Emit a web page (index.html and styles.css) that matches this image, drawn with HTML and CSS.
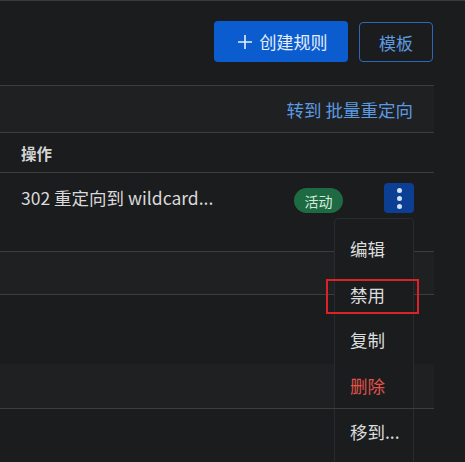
FILE: index.html
```html
<!DOCTYPE html>
<html lang="zh">
<head>
<meta charset="utf-8">
<link rel="stylesheet" href="styles.css">
</head>
<body>
<div class="page">
  <div class="toolbar">
    <button class="btn btn-primary">
      <svg class="plus" width="16" height="16" viewBox="0 0 16 16"><path d="M8 1v14M1 8h14" stroke="#e6eefc" stroke-width="1.6" fill="none"/></svg>
      <span>创建规则</span>
    </button>
    <button class="btn btn-outline">模板</button>
  </div>
  <div class="table">
    <div class="bulk"><a class="link">转到 批量重定向</a></div>
    <div class="head">操作</div>
    <div class="row">
      <span class="desc">302 重定向到 wildcard...</span>
      <span class="badge">活动</span>
      <span class="kebab-wrap">
        <button class="kebab"><i></i><i></i><i></i></button>
        <div class="menu">
          <div class="item">编辑</div>
          <div class="item">禁用</div>
          <div class="item">复制</div>
          <div class="item danger">删除</div>
          <div class="sep"></div>
          <div class="item">移到...</div>
        </div>
        <div class="highlight"></div>
      </span>
    </div>
    <div class="band light h42"></div>
    <div class="band dark h69"></div>
    <div class="band light h44 nob"></div>
    <div class="band dark h60"></div>
  </div>
</div>
</body>
</html>
```

FILE: styles.css
```css
* { box-sizing: border-box; }
html, body {
  margin: 0;
  height: 100%;
  background: #1b1c1e;
  overflow: hidden;
}
body {
  font-family: "Noto Sans CJK SC", "Noto Sans", sans-serif;
  color: #d9d9d9;
}
.page {
  border-top: 1px solid #3a3b3d;
}
.toolbar {
  height: 84px;
  display: flex;
  justify-content: flex-end;
  align-items: flex-start;
  gap: 11px;
  padding: 20px 32px 0 0;
}
.btn {
  font-family: inherit;
  font-size: 17px;
  border-radius: 4px;
  display: flex;
  align-items: center;
  justify-content: center;
  cursor: pointer;
  padding: 0;
}
.btn-primary {
  width: 134px;
  height: 41px;
  background: #0b5dcf;
  border: none;
  color: #e6eefc;
  gap: 7px;
  padding-left: 2px;
}
.btn-outline {
  width: 74px;
  height: 40px;
  margin-top: 1px;
  background: transparent;
  border: 1px solid #2d67b8;
  color: #5b9ae0;
}
.table {
  width: 434px;
}
.bulk {
  border-top: 1px solid #3c3d3f;
  height: 47px;
  background: #1f2022;
  display: flex;
  justify-content: flex-end;
  align-items: center;
  padding-right: 21px;
  font-size: 17.5px;
}
.link {
  color: #5b9ae0;
}
.head {
  border-top: 1px solid #3c3d3f;
  height: 40px;
  display: flex;
  align-items: center;
  padding-left: 21px;
  font-size: 15.5px;
  font-weight: 700;
  color: #d4d4d4;
}
.row {
  border-top: 1px solid #3c3d3f;
  height: 79px;
  display: flex;
  align-items: flex-start;
  padding: 10px 20px 0 21px;
}
.desc {
  flex: 1;
  font-size: 17.5px;
  line-height: 30px;
  color: #d9d9d9;
  white-space: nowrap;
}
.badge {
  margin-top: 5px;
  width: 49px;
  height: 25px;
  border-radius: 13px;
  background: #1d6a43;
  color: #d3eadb;
  font-size: 14px;
  display: flex;
  align-items: center;
  justify-content: center;
  margin-right: 41px;
}
.kebab-wrap {
  position: relative;
}
.kebab {
  width: 30px;
  height: 30px;
  border: none;
  border-radius: 4px;
  background: #0c3f94;
  display: flex;
  flex-direction: column;
  align-items: center;
  justify-content: center;
  gap: 3px;
  padding: 0;
}
.kebab i {
  width: 5px;
  height: 5px;
  border-radius: 50%;
  background: #d2e2fb;
}
.menu {
  position: absolute;
  top: 35px;
  right: 0;
  width: 80px;
  height: 260px;
  background: #1b1c1e;
  border: 1px solid #2a2b2e;
  border-radius: 4px 4px 0 0;
  padding-top: 7px;
  z-index: 2;
}
.item {
  height: 45.5px;
  display: flex;
  align-items: center;
  padding-left: 15px;
  font-size: 17.5px;
  color: #dcdcdc;
}
.item.danger {
  color: #e0524a;
}
.sep {
  height: 1px;
  background: #3c3d3f;
  margin: 0 -1px;
}
.highlight {
  position: absolute;
  top: 96px;
  left: -58px;
  width: 93px;
  height: 35px;
  border: 2px solid #dc2228;
  z-index: 3;
}
.band {
  border-top: 1px solid #3c3d3f;
}
.band.nob {
  border-top: none;
}
.light { background: #1f2022; }
.dark { background: #1b1c1e; }
.h42 { height: 43px; }
.h69 { height: 70px; }
.h44 { height: 44px; }
.h60 { height: 60px; }
```
